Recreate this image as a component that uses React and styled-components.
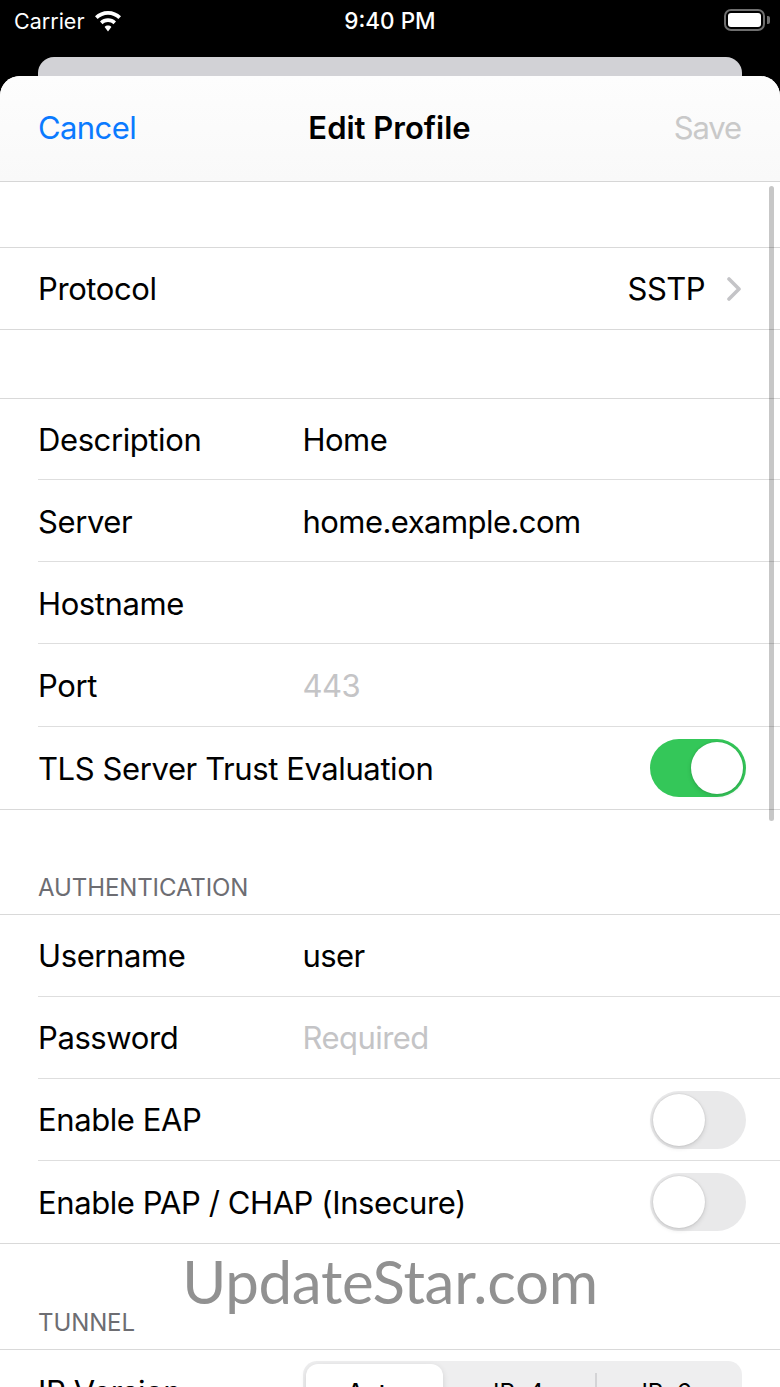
import React from "react";
import styled, { createGlobalStyle } from "styled-components";

const GlobalStyle = createGlobalStyle`
  html, body {
    margin: 0;
    padding: 0;
    height: 1387px;
    overflow: hidden;
    background: #000;
  }
  * {
    box-sizing: border-box;
  }
`;

const Screen = styled.div`
  position: relative;
  width: 780px;
  height: 1387px;
  overflow: hidden;
  background: #000;
  font-family: Inter, "Liberation Sans", sans-serif;
  color: #000;
`;

const StatusBar = styled.div`
  position: relative;
  height: 57px;
  display: flex;
  align-items: flex-start;
  justify-content: space-between;
  padding: 9px 10px 0 14px;
  color: #fff;
`;

const Carrier = styled.div`
  display: flex;
  align-items: center;
  gap: 10px;
  font-size: 21.5px;
  line-height: 24px;
`;

const Clock = styled.div`
  position: absolute;
  left: 0;
  right: 0;
  top: 8px;
  text-align: center;
  font-size: 22.5px;
  line-height: 26px;
  font-weight: 500;
`;

const Battery = styled.div`
  display: flex;
  align-items: center;
  gap: 2px;
`;

const BatteryShell = styled.div`
  width: 41px;
  height: 22px;
  border: 2px solid #6f6f6f;
  border-radius: 7px;
  padding: 2px;
`;

const BatteryLevel = styled.div`
  width: 100%;
  height: 100%;
  background: #fff;
  border-radius: 3px;
`;

const BatteryNub = styled.div`
  width: 3px;
  height: 8px;
  background: #6f6f6f;
  border-radius: 0 2px 2px 0;
`;

const BackCard = styled.div`
  height: 19px;
  margin: 0 38px;
  background: #d2d2d6;
  border-radius: 16px 16px 0 0;
`;

const Sheet = styled.div`
  position: relative;
  height: 1311px;
  background: #fff;
  border-radius: 20px 20px 0 0;
  overflow: hidden;
`;

const NavBar = styled.div`
  height: 106px;
  display: grid;
  grid-template-columns: 1fr auto 1fr;
  align-items: center;
  padding: 0 39px 2px 38px;
  background: linear-gradient(#fdfdfd, #f9f9f9);
  border-bottom: 1px solid #d6d6d6;
  font-size: 31px;
`;

const Cancel = styled.div`
  color: #0a7aff;
  letter-spacing: -0.6px;
`;

const Title = styled.div`
  font-weight: 600;
  letter-spacing: 0;
`;

const Save = styled.div`
  color: #c9c9c9;
  text-align: right;
  letter-spacing: -1.1px;
`;

const Spacer = styled.div`
  height: ${(p) => p.$height}px;
`;

const Group = styled.div`
  border-top: 1px solid #d9d9d9;
  border-bottom: 1px solid #d9d9d9;
`;

const Row = styled.div`
  height: ${(p) => p.$height || 82}px;
  margin-left: 38px;
  padding-top: ${(p) => p.$shift || 0}px;
  display: flex;
  align-items: center;
  font-size: 31px;
  letter-spacing: -0.4px;
  white-space: nowrap;
  border-bottom: 1px solid #dedede;

  &:last-child {
    border-bottom: 0;
  }
`;

const Label = styled.div`
  flex: 0 0 264.5px;
`;

const Value = styled.div`
  letter-spacing: -0.55px;
  color: ${(p) => (p.$placeholder ? "#c4c4c6" : "#000")};
`;

const RightValue = styled.div`
  margin-left: auto;
  display: flex;
  align-items: center;
  gap: 22px;
  padding-right: 39px;
  letter-spacing: -0.55px;
`;

const Toggle = styled.div`
  margin-left: auto;
  margin-right: 34px;
  flex: 0 0 96px;
  height: 58px;
  border-radius: 29px;
  padding: 3px;
  display: flex;
  justify-content: ${(p) => (p.$on ? "flex-end" : "flex-start")};
  background: ${(p) => (p.$on ? "#34c759" : "#e9e9ea")};
`;

const Thumb = styled.div`
  width: 52px;
  height: 52px;
  border-radius: 50%;
  background: #fff;
  box-shadow: 0 2px 5px rgba(0, 0, 0, 0.12), 0 0 2px rgba(0, 0, 0, 0.14);
`;

const SectionHeader = styled.div`
  height: ${(p) => p.$height}px;
  display: flex;
  align-items: flex-end;
  padding: 0 0 12px 38px;
  font-size: 24px;
  line-height: 28px;
  letter-spacing: -0.1px;
  color: #6d6d72;
`;

const Segmented = styled.div`
  flex: 0 0 439px;
  height: 58px;
  align-self: flex-start;
  margin-top: 11px;
  padding: 3px;
  display: grid;
  grid-template-columns: 137px 152px 1fr;
  background: #eeeeef;
  border-radius: 14px;
  font-size: 24px;
  letter-spacing: 0;
`;

const Segment = styled.div`
  position: relative;
  display: flex;
  justify-content: center;
  padding-top: 14px;
  border-radius: 12px;
  font-weight: ${(p) => (p.$active ? 500 : 400)};
  background: ${(p) => (p.$active ? "#fff" : "transparent")};
  box-shadow: ${(p) => (p.$active ? "0 2px 6px rgba(0,0,0,0.12)" : "none")};

  ${(p) =>
    p.$divided &&
    `&::before {
      content: "";
      position: absolute;
      left: 0;
      top: 9px;
      bottom: 9px;
      width: 2px;
      background: #d4d4d6;
    }`}
`;

const ScrollBar = styled.div`
  position: absolute;
  top: 110px;
  right: 6px;
  width: 5px;
  height: 635px;
  background: rgba(0, 0, 0, 0.22);
  border-radius: 3px;
`;

const Watermark = styled.div`
  position: absolute;
  left: 0;
  right: 0;
  top: 1241px;
  text-align: center;
  font-family: Lato, "Open Sans", sans-serif;
  font-size: 60px;
  letter-spacing: -0.3px;
  line-height: 80px;
  color: #919191;
`;

function WifiIcon() {
  return (
    <svg width="28" height="21" viewBox="0 0 28 21">
      <path
        d="M14 0C8.9 0 4.3 2 1 5.3l2.6 2.8C6.3 5.4 10 3.8 14 3.8s7.7 1.6 10.4 4.3L27 5.3C23.7 2 19.1 0 14 0z"
        fill="#fff"
      />
      <path
        d="M14 7.3c-3.1 0-5.9 1.2-8 3.2l2.6 2.8c1.4-1.4 3.3-2.2 5.4-2.2s4 .8 5.4 2.2l2.6-2.8c-2.1-2-4.9-3.2-8-3.2z"
        fill="#fff"
      />
      <path
        d="M14 14.5c-1.3 0-2.5.5-3.4 1.4L14 20.5l3.4-4.6c-.9-.9-2.1-1.4-3.4-1.4z"
        fill="#fff"
      />
    </svg>
  );
}

function Chevron() {
  return (
    <svg width="14" height="24" viewBox="0 0 14 24">
      <path
        d="M2 2l10 10L2 22"
        fill="none"
        stroke="#c4c4c7"
        strokeWidth="3.6"
        strokeLinecap="round"
        strokeLinejoin="round"
      />
    </svg>
  );
}

function Switch({ on }) {
  return (
    <Toggle $on={on}>
      <Thumb />
    </Toggle>
  );
}

export default function App() {
  return (
    <Screen>
      <GlobalStyle />
      <StatusBar>
        <Carrier>
          Carrier
          <WifiIcon />
        </Carrier>
        <Clock>9:40 PM</Clock>
        <Battery>
          <BatteryShell>
            <BatteryLevel />
          </BatteryShell>
          <BatteryNub />
        </Battery>
      </StatusBar>
      <BackCard />
      <Sheet>
        <NavBar>
          <Cancel>Cancel</Cancel>
          <Title>Edit Profile</Title>
          <Save>Save</Save>
        </NavBar>
        <Spacer $height={65} />
        <Group>
          <Row $height={81}>
            <Label>Protocol</Label>
            <RightValue>
              SSTP
              <Chevron />
            </RightValue>
          </Row>
        </Group>
        <Spacer $height={68} />
        <Group>
          <Row $height={81}>
            <Label>Description</Label>
            <Value>Home</Value>
          </Row>
          <Row $shift={2}>
            <Label>Server</Label>
            <Value>home.example.com</Value>
          </Row>
          <Row $shift={2}>
            <Label>Hostname</Label>
          </Row>
          <Row $height={83}>
            <Label>Port</Label>
            <Value $placeholder>443</Value>
          </Row>
          <Row>
            <Label>TLS Server Trust Evaluation</Label>
            <Switch on />
          </Row>
        </Group>
        <SectionHeader $height={104}>AUTHENTICATION</SectionHeader>
        <Group>
          <Row>
            <Label>Username</Label>
            <Value>user</Value>
          </Row>
          <Row>
            <Label>Password</Label>
            <Value $placeholder>Required</Value>
          </Row>
          <Row>
            <Label>Enable EAP</Label>
            <Switch />
          </Row>
          <Row>
            <Label>Enable PAP / CHAP (Insecure)</Label>
            <Switch />
          </Row>
        </Group>
        <SectionHeader $height={105}>TUNNEL</SectionHeader>
        <Group>
          <Row>
            <Label>IP Version</Label>
            <Segmented>
              <Segment $active>Auto</Segment>
              <Segment>IPv4</Segment>
              <Segment $divided>IPv6</Segment>
            </Segmented>
          </Row>
        </Group>
        <ScrollBar />
      </Sheet>
      <Watermark>UpdateStar.com</Watermark>
    </Screen>
  );
}
